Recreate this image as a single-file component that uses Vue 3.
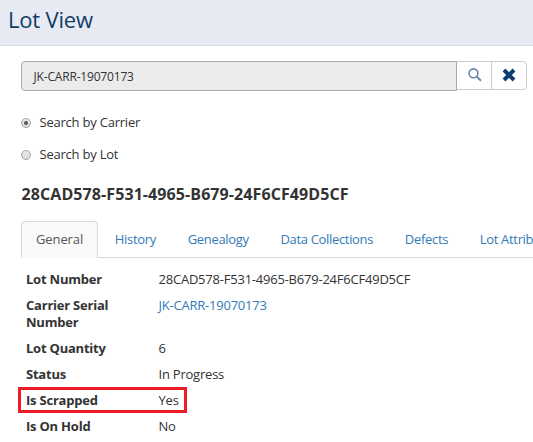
<script setup>
import { ref } from 'vue'

const lot = '28CAD578-F531-4965-B679-24F6CF49D5CF'
const carrier = ref('JK-CARR-19070173')
const mode = ref('Carrier')
const modes = ['Carrier', 'Lot']
const activeTab = ref('General')
const tabs = ['General', 'History', 'Genealogy', 'Data Collections', 'Defects', 'Lot Attributes']
const rows = [
  { label: 'Lot Number', value: lot },
  { label: 'Carrier Serial Number', value: 'JK-CARR-19070173', link: true },
  { label: 'Lot Quantity', value: '6' },
  { label: 'Status', value: 'In Progress' },
  { label: 'Is Scrapped', value: 'Yes', marked: true },
  { label: 'Is On Hold', value: 'No' },
]
</script>

<template>
  <div class="page">
    <header class="header"><h1>Lot View</h1></header>
    <main class="content">
      <div class="search">
        <div class="field">{{ carrier }}</div>
        <button class="btn find" type="button" aria-label="Search">
          <svg width="14" height="14" viewBox="0 0 14 14">
            <circle cx="5.5" cy="5.3" r="4.4" fill="none" stroke="#6688ad" stroke-width="1.6" />
            <path d="M8.8 8.7L13 12.7" stroke="#6688ad" stroke-width="1.9" />
          </svg>
        </button>
        <button class="btn clear" type="button" aria-label="Clear">
          <svg width="14" height="14" viewBox="0 0 14 14">
            <path d="M2 2L12 12M12 2L2 12" stroke="#0d3c70" stroke-width="3.9" />
          </svg>
        </button>
      </div>
      <div class="modes">
        <label v-for="m in modes" :key="m" class="mode" @click="mode = m">
          <span class="radio" :class="{ checked: mode === m }"></span>
          <span>Search by {{ m }}</span>
        </label>
      </div>
      <h2>{{ lot }}</h2>
      <nav class="tabs">
        <a v-for="t in tabs" :key="t" class="tab" :class="{ active: activeTab === t }" @click="activeTab = t">{{ t }}</a>
      </nav>
      <dl class="details">
        <div v-for="r in rows" :key="r.label" class="row" :class="{ marked: r.marked }">
          <dt>{{ r.label }}</dt>
          <dd :class="{ link: r.link }">{{ r.value }}</dd>
        </div>
      </dl>
    </main>
  </div>
</template>

<style>
body {
  margin: 0;
  overflow: hidden;
}
</style>

<style scoped>
.page {
  box-sizing: border-box;
  width: 100%;
  height: 442px;
  overflow: hidden;
  background: #fff;
  color: #333;
  font: 13px/17px "Open Sans", sans-serif;
  letter-spacing: -0.22px;
}
.header {
  box-sizing: border-box;
  height: 46px;
  padding: 4px 8px 0;
  background: #e7eaf2;
  border-bottom: 1px solid #d9dce3;
}
h1 {
  margin: 0;
  color: #103d65;
  font-size: 22px;
  font-weight: 400;
  line-height: 30px;
  letter-spacing: -0.2px;
}
.content {
  padding: 15px 0 0 21px;
}
.search {
  display: flex;
  align-items: flex-start;
  height: 30px;
}
.field {
  box-sizing: border-box;
  width: 436px;
  height: 30px;
  padding: 0 11.5px;
  border: 1px solid #aaa;
  border-radius: 4px 0 0 4px;
  background: #ebebeb;
  font-size: 12px;
  line-height: 29px;
  letter-spacing: -0.18px;
}
.btn {
  box-sizing: border-box;
  display: flex;
  align-items: center;
  justify-content: center;
  height: 29px;
  padding: 0;
  border: 1px solid #ccc;
  background: #fff;
}
.btn svg {
  margin-top: -2px;
}
.find {
  width: 35px;
  border-left: 0;
  border-right: 0;
}
.clear {
  width: 36px;
  margin-left: -1px;
  border-radius: 0 4px 4px 0;
}
.modes {
  display: flex;
  flex-direction: column;
  gap: 15px;
  margin-top: 23px;
}
.mode {
  display: flex;
  align-items: center;
  gap: 8.5px;
}
.radio {
  box-sizing: border-box;
  display: flex;
  align-items: center;
  justify-content: center;
  width: 10px;
  height: 10px;
  border: 1px solid #a3a3a3;
  border-radius: 50%;
  background: linear-gradient(#e9e9e9, #dadada);
}
.radio.checked::after {
  content: "";
  width: 4px;
  height: 4px;
  border-radius: 50%;
  background: #555;
}
h2 {
  margin: 20px 0 0 0.5px;
  font-size: 16px;
  font-weight: 700;
  line-height: 22px;
  letter-spacing: 0.09px;
}
.tabs {
  display: flex;
  gap: 1.7px;
  height: 37px;
  margin-top: 16px;
  overflow: hidden;
  box-shadow: inset 0 -1px #d9d9d9;
}
.tab {
  box-sizing: border-box;
  flex: none;
  height: 37px;
  padding: 8px 14px 0;
  border: 1px solid transparent;
  border-bottom: 0;
  color: #337ab7;
  line-height: 18px;
  letter-spacing: -0.32px;
  cursor: pointer;
}
.tab.active {
  border-color: #d9d9d9;
  border-radius: 4px 4px 0 0;
  background: #fafafa;
  color: #555;
  letter-spacing: -0.1px;
}
.details {
  margin: 9px 0 0;
}
.row {
  position: relative;
  display: flex;
  padding: 4px 0 5px 5px;
}
dt {
  width: 112px;
  margin-right: 20.5px;
  font-weight: 700;
}
dd {
  margin: 0;
}
.link {
  color: #337ab7;
}
.marked::after {
  content: "";
  position: absolute;
  top: -1px;
  left: -3px;
  box-sizing: border-box;
  width: 169px;
  height: 26px;
  border: 3px solid #ed1c24;
}
</style>
